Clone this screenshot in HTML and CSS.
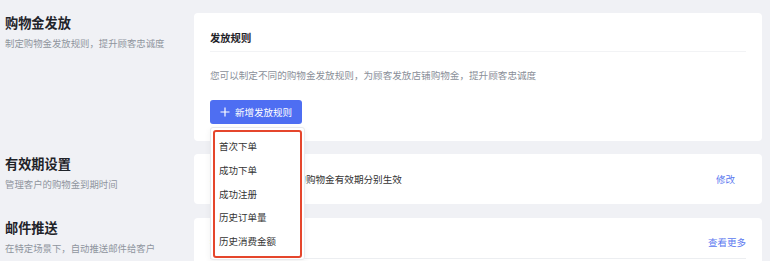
FILE: index.html
```html
<!DOCTYPE html>
<html lang="zh-CN">
<head>
  <meta charset="UTF-8" />
  <title>购物金设置</title>
  <link rel="stylesheet" href="styles.css">
</head>
<body>

<div class="page">

  <div class="section">
    <div class="intro">
      <h2>购物金发放</h2>
      <p>制定购物金发放规则，提升顾客忠诚度</p>
    </div>
    <div class="card card-rules">
      <div class="card-title">发放规则</div>
      <div class="desc">您可以制定不同的购物金发放规则，为顾客发放店铺购物金，提升顾客忠诚度</div>
      <div class="btn-wrap">
        <button class="btn-primary">
          <svg width="10" height="10" viewBox="0 0 10 10"><path d="M5 0.5v9M0.5 5h9" stroke="#fff" stroke-width="1.2" fill="none"/></svg>
          新增发放规则
        </button>
        <div class="dropdown">
          <ul class="menu">
            <li>首次下单</li>
            <li>成功下单</li>
            <li>成功注册</li>
            <li>历史订单量</li>
            <li>历史消费金额</li>
          </ul>
        </div>
      </div>
    </div>
  </div>

  <div class="section sec-expire">
    <div class="intro">
      <h2>有效期设置</h2>
      <p>管理客户的购物金到期时间</p>
    </div>
    <div class="card card-row">
      <span class="row-text">将按照不同规则发放的购物金有效期分别生效</span>
      <a class="link">修改</a>
    </div>
  </div>

  <div class="section sec-mail">
    <div class="intro">
      <h2>邮件推送</h2>
      <p>在特定场景下，自动推送邮件给客户</p>
    </div>
    <div class="card card-mail">
      <div class="card-row-inner">
        <span class="row-text">推送场景</span>
        <a class="link">查看更多</a>
      </div>
      <div class="line"></div>
    </div>
  </div>

</div>

</body>
</html>
```

FILE: styles.css
```css
body {
  margin: 0;
  font-family: "Noto Sans CJK SC", "Noto Sans", sans-serif;
  background-color: #f0f1f5;
  color: #1f2329;
  overflow: hidden;
}

.page {
  padding: 13px 8px 0 5px;
}

.section {
  display: flex;
  align-items: flex-start;
  margin-bottom: 13px;
}

.sec-mail {
  margin-top: 14px;
}

.intro {
  width: 189px;
  flex: none;
  padding-top: 1px;
}

.intro h2 {
  margin: 0;
  font-size: 13.2px;
  font-weight: 700;
  line-height: 18px;
}

.intro p {
  margin: 4px 0 0;
  font-size: 9.4px;
  color: #8f959e;
  line-height: 14px;
}

.card {
  flex: 1;
  background-color: white;
  border-radius: 4px;
  padding: 0 16px;
}

.card-rules {
  padding-top: 17px;
  padding-bottom: 17px;
}

.card-title {
  font-size: 10.3px;
  font-weight: 700;
  line-height: 16px;
  padding-bottom: 5px;
  border-bottom: 1px solid #f2f3f5;
}

.desc {
  margin-top: 16px;
  font-size: 9.6px;
  color: #8a8f99;
  line-height: 14px;
}

.btn-wrap {
  position: relative;
  margin-top: 18px;
}

.btn-primary {
  display: flex;
  align-items: center;
  gap: 5px;
  height: 24px;
  width: 92px;
  padding: 0 0 0 10px;
  border: none;
  border-radius: 3px;
  background-color: #4e6ef2;
  color: white;
  font-family: inherit;
  font-size: 9.5px;
}

.dropdown {
  position: absolute;
  top: 27px;
  left: 0;
  width: 93px;
  background: white;
  border: 1px solid #e8eaee;
  border-radius: 3px;
  box-shadow: 0 2px 6px rgba(0,0,0,0.06);
  padding: 2px 0 1px;
  z-index: 2;
}

.menu {
  list-style: none;
  margin: 0 0 0 2px;
  width: 85px;
  padding: 3px 0 2px;
  border: 2px solid #e5462c;
  border-radius: 3px;
}

.menu li {
  height: 23.75px;
  line-height: 23.75px;
  padding-left: 4px;
  font-size: 9.5px;
  color: #333;
}

.card-row {
  height: 50px;
  display: flex;
  align-items: center;
  justify-content: space-between;
}

.row-text {
  font-size: 9.6px;
  color: #333;
}

.link {
  font-size: 9.5px;
  color: #5b78f0;
  margin-right: 11px;
}

.card-mail {
  height: 60px;
}

.card-row-inner {
  height: 48px;
  display: flex;
  align-items: center;
  justify-content: space-between;
}

.card-mail .link {
  margin-right: 0;
}

.line {
  margin-top: -8px;
  border-bottom: 1px solid #eceef1;
}
```
